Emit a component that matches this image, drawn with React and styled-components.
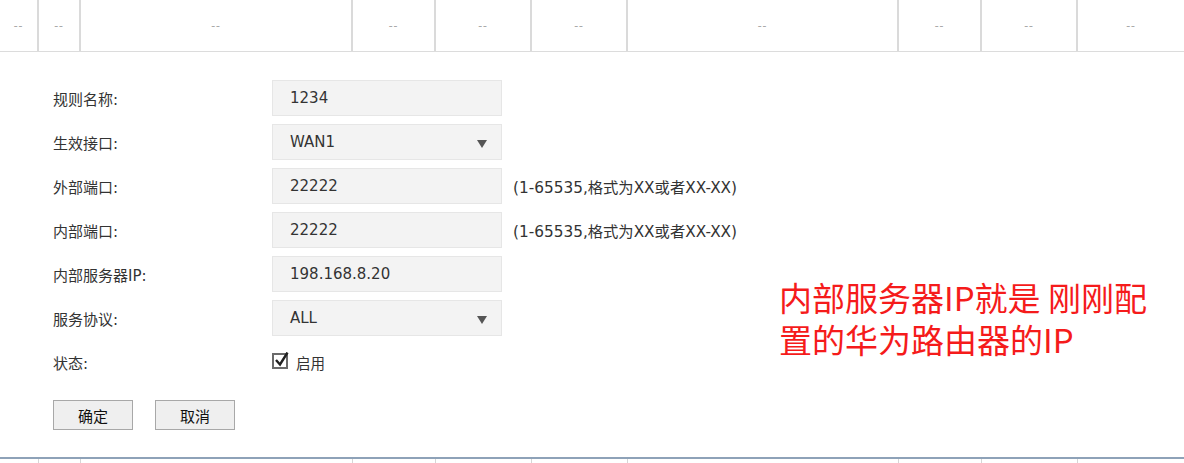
import React, { useState } from "react";
import styled, { createGlobalStyle } from "styled-components";

const GlobalStyle = createGlobalStyle`
  html, body {
    margin: 0;
    padding: 0;
    background: #fff;
  }
  body {
    font-family: "DejaVu Sans", "Noto Sans CJK SC", sans-serif;
    color: #333;
  }
`;

const columns = "39px 42px 272px 83px 96px 96px 271px 83px 96px 1fr";
const cols = Array.from({ length: 10 });

function App() {
  const [enabled, setEnabled] = useState(true);

  return (
    <Page>
      <GlobalStyle />
      <TableRow>
        {cols.map((_, i) => (
          <Cell key={i}>--</Cell>
        ))}
      </TableRow>

      <FormArea>
        <Form>
          <Row>
            <Label>规则名称:</Label>
            <Field>1234</Field>
          </Row>
          <Row>
            <Label>生效接口:</Label>
            <Field>
              WAN1
              <Arrow />
            </Field>
          </Row>
          <Row>
            <Label>外部端口:</Label>
            <Field>22222</Field>
            <Hint>(1-65535,格式为XX或者XX-XX)</Hint>
          </Row>
          <Row>
            <Label>内部端口:</Label>
            <Field>22222</Field>
            <Hint>(1-65535,格式为XX或者XX-XX)</Hint>
          </Row>
          <Row>
            <Label>内部服务器IP:</Label>
            <Field>198.168.8.20</Field>
          </Row>
          <Row>
            <Label>服务协议:</Label>
            <Field>
              ALL
              <Arrow />
            </Field>
          </Row>
          <Row>
            <Label>状态:</Label>
            <Check onClick={() => setEnabled(!enabled)}>
              <Box>
                {enabled && (
                  <svg width="16" height="16" viewBox="0 0 16 16">
                    <path
                      d="M3 8 L7 12.5 L14.5 0.5"
                      fill="none"
                      stroke="#222"
                      strokeWidth="2.4"
                    />
                  </svg>
                )}
              </Box>
              启用
            </Check>
          </Row>
          <Buttons>
            <Button>确定</Button>
            <Button>取消</Button>
          </Buttons>
        </Form>

        <Note>
          <span>内部服务器IP就是 刚刚配</span>
          <span>置的华为路由器的IP</span>
        </Note>
      </FormArea>

      <FooterRow>
        {cols.map((_, i) => (
          <Tick key={i} />
        ))}
      </FooterRow>
    </Page>
  );
}

const Page = styled.div`
  width: 1184px;
  height: 463px;
  overflow: hidden;
  display: flex;
  flex-direction: column;
`;

const TableRow = styled.div`
  display: grid;
  grid-template-columns: ${columns};
  height: 51px;
  border-bottom: 1px solid #dcdcdc;
`;

const Cell = styled.div`
  display: flex;
  align-items: center;
  justify-content: center;
  border-right: 2px solid #dadada;
  font-family: "Noto Sans", sans-serif;
  font-size: 12px;
  color: #aaa;
  letter-spacing: 1px;

  &:last-child {
    border-right: none;
  }
`;

const FormArea = styled.div`
  position: relative;
  flex: 1;
  padding: 28px 0 0 53px;
`;

const Form = styled.div`
  display: flex;
  flex-direction: column;
  gap: 8px;
`;

const Row = styled.div`
  display: flex;
  align-items: center;
  height: 36px;
`;

const Label = styled.div`
  width: 219px;
  font-size: 15px;
  color: #333;
`;

const Field = styled.div`
  position: relative;
  box-sizing: border-box;
  width: 230px;
  height: 36px;
  padding: 0 17px;
  display: flex;
  align-items: center;
  background: #f3f3f3;
  border: 1px solid #e6e6e6;
  font-size: 15px;
  color: #333;
`;

const Arrow = styled.span`
  position: absolute;
  right: 14px;
  top: 15px;
  width: 0;
  height: 0;
  border-left: 5.5px solid transparent;
  border-right: 5.5px solid transparent;
  border-top: 8px solid #555;
`;

const Hint = styled.div`
  margin-left: 11px;
  font-size: 15.3px;
  color: #333;
`;

const Check = styled.label`
  display: flex;
  align-items: center;
  gap: 8px;
  font-size: 14.5px;
  color: #333;
  cursor: pointer;
`;

const Box = styled.span`
  position: relative;
  box-sizing: border-box;
  width: 16px;
  height: 16px;
  border: 2px solid #6a6a6a;
  margin-top: -3px;

  svg {
    position: absolute;
    left: -1px;
    top: -3px;
  }
`;

const Buttons = styled.div`
  display: flex;
  gap: 22px;
  margin-top: 12px;
`;

const Button = styled.button`
  width: 80px;
  height: 30px;
  background: #efefef;
  border: 1px solid #a8a8a8;
  font-family: "Noto Sans CJK SC", sans-serif;
  font-size: 15px;
  color: #111;
  padding: 0;
  cursor: pointer;
`;

const Note = styled.div`
  position: absolute;
  left: 779px;
  top: 224px;
  display: flex;
  flex-direction: column;
  font-family: "Noto Sans CJK SC", sans-serif;
  font-size: 33px;
  line-height: 42px;
  color: #f51b1b;
  white-space: nowrap;
`;

const FooterRow = styled.div`
  display: grid;
  grid-template-columns: ${columns};
  height: 4px;
  border-top: 2px solid #8ea2b8;
`;

const Tick = styled.div`
  border-right: 1px solid #d6d6d6;

  &:last-child {
    border-right: none;
  }
`;

export default App;
